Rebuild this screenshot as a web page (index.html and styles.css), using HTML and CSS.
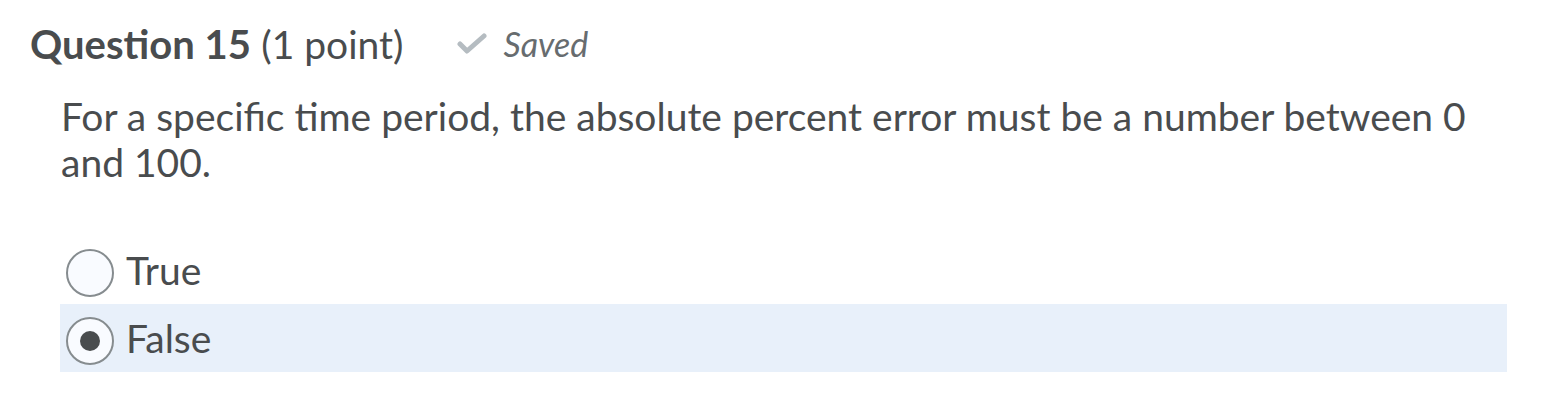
FILE: index.html
```html
<!DOCTYPE html>
<html lang="en">
<head>
<meta charset="utf-8">
<title>Question 15</title>
<link rel="stylesheet" href="styles.css">
</head>
<body>
<div class="question">
  <div class="q-header">
    <h2 class="q-title"><strong>Question 15</strong> <span class="q-points">(1 point)</span></h2>
    <span class="q-status">
      <svg class="q-check" width="30" height="22" viewBox="0 0 30 22" aria-hidden="true">
        <path d="M3 11 L10 18 L27 3" fill="none" stroke="#b5bcc1" stroke-width="5" stroke-linecap="round" stroke-linejoin="round"/>
      </svg>
      <span class="q-saved">Saved</span>
    </span>
  </div>
  <div class="q-body">
    <p class="q-text">For a specific time period, the absolute percent error must be a number between 0 and 100.</p>
    <div class="q-options">
      <label class="opt">
        <span class="radio"></span>
        <span class="opt-label">True</span>
      </label>
      <label class="opt opt-selected">
        <span class="radio radio-checked"></span>
        <span class="opt-label">False</span>
      </label>
    </div>
  </div>
</div>
</body>
</html>
```

FILE: styles.css
```css
html, body {
  margin: 0;
  padding: 0;
  background: #ffffff;
}

body {
  font-family: Lato, "Open Sans", "Liberation Sans", sans-serif;
  color: #494c4e;
}

.question {
  padding: 19px 41px 0 30px;
}

.q-header {
  display: flex;
  align-items: center;
  gap: 54px;
  height: 50px;
}

.q-title {
  margin: 0;
  font-size: 40px;
  line-height: 50px;
  font-weight: 400;
  color: #494c4e;
  white-space: nowrap;
}

.q-title strong {
  font-weight: 700;
}

.q-points {
  font-size: 39px;
}

.q-status {
  display: flex;
  align-items: center;
  gap: 16px;
  color: #676c6f;
}

.q-check {
  display: block;
}

.q-saved {
  font-style: italic;
  font-size: 34px;
  line-height: 40px;
}

.q-body {
  padding-left: 31px;
}

.q-text {
  margin: 24px 0 0 0;
  font-size: 39px;
  line-height: 46px;
  width: 1425px;
}

.q-options {
  margin-top: 51px;
  display: flex;
  flex-direction: column;
  margin-left: -1px;
}

.opt {
  display: flex;
  align-items: center;
  gap: 12px;
  height: 68px;
  padding-left: 6px;
  padding-top: 6px;
  box-sizing: border-box;
  font-size: 39px;
}

.opt-selected {
  background: #e8f0fa;
}

.radio {
  width: 48px;
  height: 48px;
  box-sizing: border-box;
  border: 2px solid #868c8f;
  border-radius: 50%;
  background: #f9fbff;
  display: flex;
  align-items: center;
  justify-content: center;
  flex: none;
}

.radio-checked::after {
  content: "";
  width: 20px;
  height: 20px;
  border-radius: 50%;
  background: #494c4e;
}

.opt-label {
  line-height: 44px;
  margin-top: -6px;
}
```
